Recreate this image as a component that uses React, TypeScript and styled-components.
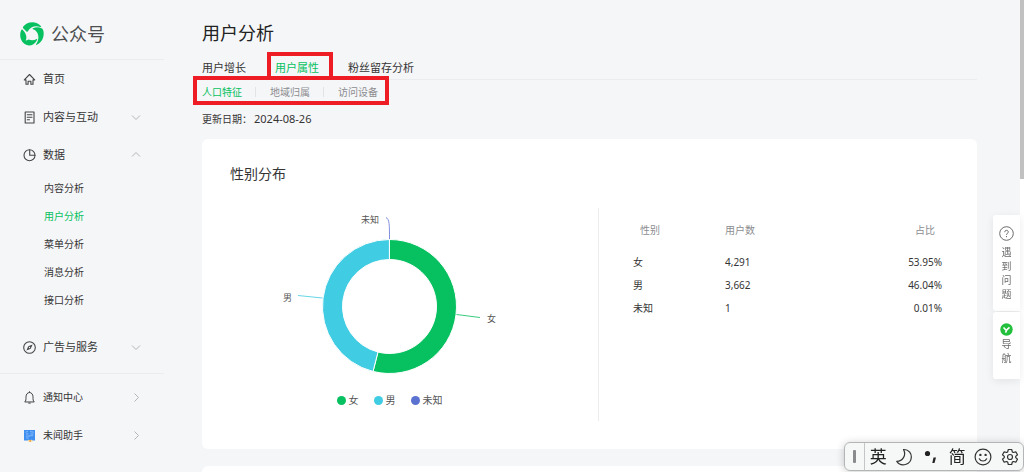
import React from 'react';
import styled, { createGlobalStyle, css } from 'styled-components';

const GREEN = '#07c160';
const CYAN = '#40cce2';
const INDIGO = '#5b72d0';

const GlobalStyle = createGlobalStyle`
  *, *::before, *::after { box-sizing: border-box; }
  body {
    margin: 0;
    background: #f5f6f8;
    color: #353535;
    font-family: "Noto Sans", "Noto Sans CJK SC", sans-serif;
    font-size: 10px;
    line-height: 20px;
  }
  h1, h2, p, ul { margin: 0; padding: 0; font-weight: 400; }
  ul { list-style: none; }
  a { color: inherit; text-decoration: none; }
  button { border: 0; padding: 0; background: none; font: inherit; color: inherit; cursor: pointer; }
`;

const Page = styled.div`
  display: flex;
  height: 100vh;
  overflow: hidden;
`;

const Sidebar = styled.aside`
  flex: 0 0 164px;
`;

const Brand = styled.a`
  display: flex;
  align-items: center;
  gap: 7px;
  height: 59px;
  padding: 9px 0 0 20px;
  font-size: 18px;
  line-height: 24px;
  color: #4c4e50;
`;

const NavGroup = styled.nav<{ $last?: boolean }>`
  border-top: 1px solid #ebecee;
  padding: ${(p) => (p.$last ? '4px 0 0' : '0 0 7px')};
`;

const NavRow = styled.button<{ $small?: boolean }>`
  display: grid;
  grid-template-columns: 13px 1fr 10px;
  align-items: center;
  column-gap: 7px;
  width: 100%;
  height: 38px;
  padding: 0 23px 0 23px;
  text-align: left;
  font-size: ${(p) => (p.$small ? 10 : 11)}px;
`;

const SubList = styled.ul`
  padding-bottom: 14px;
`;

const SubLink = styled.a<{ $active?: boolean }>`
  display: block;
  padding-left: 44px;
  line-height: 28px;
  color: ${(p) => (p.$active ? GREEN : 'inherit')};
`;

const Main = styled.main`
  flex: 1;
  min-width: 0;
  padding: 18px 47px 0 38px;
`;

const Title = styled.h1`
  font-size: 18px;
  line-height: 30px;
  color: #222;
`;

const Tabs = styled.nav`
  display: flex;
  gap: 29px;
  margin-top: 8px;
  border-bottom: 1px solid #ebecee;
  font-size: 11px;
  line-height: 23px;
`;

const highlight = css`
  &::after {
    content: '';
    position: absolute;
    border: 4px solid #ee1c25;
    pointer-events: none;
  }
`;

const Tab = styled.a<{ $active?: boolean }>`
  position: relative;
  color: ${(p) => (p.$active ? GREEN : 'inherit')};
  ${(p) => p.$active && highlight}
  &::after { inset: -4px -14px -1px -8px; }
`;

const SubTabs = styled.nav`
  position: relative;
  display: flex;
  width: fit-content;
  margin-top: 2px;
  ${highlight}
  &::after { inset: -6px -11px -3px -9px; }
`;

const SubTab = styled.a<{ $active?: boolean }>`
  display: flex;
  align-items: center;
  color: ${(p) => (p.$active ? GREEN : '#8c8d90')};
  &:not(:first-child)::before {
    content: '';
    width: 1px;
    height: 10px;
    margin: 0 14px 0 13px;
    background: #e2e3e5;
  }
`;

const Updated = styled.p`
  display: flex;
  gap: 2px;
  margin-top: 7px;
`;

const DateText = styled.time`
  font-size: 11px;
`;

const Card = styled.section`
  margin: 10px 0 17px;
  padding: 25px 28px 28px;
  border-radius: 6px;
  background: #fff;
`;

const CardTitle = styled.h2`
  font-size: 14px;
  line-height: 20px;
  color: #353535;
`;

const Split = styled.div`
  display: grid;
  grid-template-columns: 368fr 351fr;
  margin-top: 24px;
`;

const ChartPane = styled.div`
  display: flex;
  flex-direction: column;
  align-items: center;
  padding-right: 49px;
`;

const Legend = styled.ul`
  display: flex;
  gap: 15px;
  margin: 6px 0 11px;
  color: #555;
`;

const LegendItem = styled.li<{ $color: string }>`
  display: flex;
  align-items: center;
  gap: 3px;
  &::before {
    content: '';
    width: 9px;
    height: 9px;
    border-radius: 50%;
    background: ${(p) => p.$color};
  }
`;

const TablePane = styled.div`
  border-left: 1px solid #ebecee;
  padding: 11px 7px 0 34px;
`;

const Table = styled.table`
  width: 100%;
  border-collapse: collapse;
  th, td { padding: 0; text-align: left; line-height: 23px; }
  th { padding: 0 7px 9px; font-weight: 400; color: #8c8d90; }
  th:first-child { width: 92px; }
  th:nth-child(2) { padding-left: 0; }
  th:last-child, td:last-child { text-align: right; }
`;

const ScrollTrack = styled.div`
  position: fixed;
  inset: 0 0 0 auto;
  width: 4px;
  background: #fff;
`;

const ScrollThumb = styled.div`
  height: 38%;
  background: #c1c1c1;
`;

const Floating = styled.div`
  position: fixed;
  top: 215px;
  right: 4px;
  display: flex;
  flex-direction: column;
  gap: 1px;
  width: 27px;
`;

const FloatButton = styled.button<{ $compact?: boolean }>`
  display: flex;
  flex-direction: column;
  align-items: center;
  gap: ${(p) => (p.$compact ? 1 : 4)}px;
  padding: ${(p) => (p.$compact ? '11px 0 14px' : '11px 0 10px')};
  border-radius: 3px 0 0 3px;
  background: #fff;
  box-shadow: 0 2px 8px rgba(0, 0, 0, 0.08);
  color: #6b6c6e;
  line-height: 14px;
`;

const Vertical = styled.span`
  width: 10px;
  word-break: break-all;
`;

const ImeBar = styled.div`
  position: fixed;
  right: 0;
  bottom: 1px;
  display: flex;
  align-items: center;
  width: 180px;
  height: 29px;
  border: 1px solid #b4b5b6;
  border-radius: 6px;
  background: #f6f7f7;
  box-shadow: 0 1px 8px rgba(0, 0, 0, 0.2);
  color: #222;
`;

const ImeGrip = styled.span`
  display: flex;
  align-items: center;
  justify-content: center;
  flex: none;
  width: 20px;
  height: 100%;
  border-right: 1px solid #c4c5c6;
  &::before {
    content: '';
    width: 3px;
    height: 13px;
    border-radius: 1px;
    background: #8a8b8c;
  }
`;

const ImeButton = styled.button`
  display: flex;
  align-items: center;
  justify-content: center;
  flex: 1;
  height: 27px;
  font-size: 17px;
  line-height: 27px;
`;

const Logo = () => (
  <svg width="24" height="24" viewBox="0 0 24 24" fill={GREEN} aria-hidden="true">
    <path d="M3.300 4.600C7.500-1 16.500-1.300 21 4.300C21.300 4.800 21 5.200 20.400 5C15 3.400 10.600 4.600 7.900 9.300C7.500 10 6.900 10 6.400 9.400C5.500 8.200 4.500 7.300 3.400 6.400C2.700 5.800 2.800 5.200 3.300 4.600Z" />
    <path d="M13 6.300C15.500 5 19 5 21.600 6.200C22.400 6.600 22.900 7.300 23.200 8.200C25 14.400 21.800 20.600 16.800 22.800C16 23.100 15.700 22.600 16.200 22C19.600 17.500 19.400 9.300 13 7.300C12.400 7.100 12.400 6.600 13 6.300Z" />
    <path d="M1.200 8C1.600 7.300 2.200 7.300 2.800 7.900C5.300 10.300 6.500 13 6.400 16L5.700 18.800L8.600 17.600C11.500 18.600 14.200 18.400 16.300 17.200C17 16.800 17.300 17.300 17 17.900C14.200 23.500 8.700 24.700 4.700 22.100C.2 19.200-.900 13 1.200 8Z" />
  </svg>
);

const line = { fill: 'none', stroke: '#454648', strokeWidth: 1.1, strokeLinecap: 'round', strokeLinejoin: 'round' } as const;

const HomeIcon = () => (
  <svg width="13" height="13" viewBox="0 0 13 13" {...line} aria-hidden="true">
    <path d="M1.300 6.900L6.500 1.500L11.700 6.900H10V11.300H7.900V8.200H5.100V11.300H3V6.900Z" />
  </svg>
);
const DocIcon = () => (
  <svg width="13" height="13" viewBox="0 0 13 13" {...line} aria-hidden="true">
    <path d="M2.200 1H11V12H2.200ZM4.300 3.800H9M4.300 6.300H9M4.300 8.800H6.500" />
  </svg>
);
const PieIcon = () => (
  <svg width="13" height="13" viewBox="0 0 13 13" {...line} aria-hidden="true">
    <circle cx="6.500" cy="6.300" r="5.500" />
    <path d="M6.700 .9V6.300H11.900" />
  </svg>
);
const CompassIcon = () => (
  <svg width="13" height="13" viewBox="0 0 13 13" {...line} aria-hidden="true">
    <circle cx="6.500" cy="6.500" r="5.800" />
    <path d="M9.600 3.400L7.700 7.700L3.400 9.600L5.300 5.300Z" fill="#454648" stroke="none" />
    <circle cx="6.500" cy="6.500" r=".7" fill="#f5f6f8" stroke="none" />
  </svg>
);
const BellIcon = () => (
  <svg width="13" height="13" viewBox="0 0 13 13" {...line} strokeWidth={1} aria-hidden="true">
    <path d="M2 10.700C3 9.800 3 8.600 3 5.800C3 3.200 4.500 1.700 6.500 1.500C8.500 1.700 10 3.200 10 5.800C10 8.600 10 9.800 11 10.700ZM6.500 .7V1.500M5.700 12.100H7.300" />
  </svg>
);
const HelperIcon = () => (
  <svg width="13" height="13" viewBox="0 0 13 13" aria-hidden="true">
    <path d="M1 1H12V11.500H1Z" fill="#3f8ff0" />
    <path d="M2.500 3.200L5 2.500M3 5H5.500M7 2.600L10.800 3.200M7.500 5H10.500M3 7.200L10 6.600M3.200 9H5.500" stroke="#a5ceff" strokeWidth=".7" />
    <path d="M4.500 12.500L5.500 10.500L7.200 11.500L9 10.500L9.800 12.500Z" fill="#f5dfa8" />
    <circle cx="7.200" cy="12" r="1" fill="#f2a33a" />
  </svg>
);

const chevrons = { down: 'M1 3.500L5 7.500L9 3.500', up: 'M1 6.500L5 2.500L9 6.500', right: 'M3.500 1.500L7.500 5.500L3.500 9.500' };
const Chevron = ({ to }: { to: keyof typeof chevrons }) => (
  <svg width="10" height="10" viewBox="0 0 10 10" fill="none" stroke="#b4b5b8" aria-hidden="true">
    <path d={chevrons[to]} />
  </svg>
);

const CX = 119.5;
const CY = 98.5;
const point = (r: number, deg: number) => {
  const a = (deg * Math.PI) / 180;
  return `${(CX + r * Math.sin(a)).toFixed(2)} ${(CY - r * Math.cos(a)).toFixed(2)}`;
};
const slice = (from: number, to: number, outer = 67, inner = 47) => {
  const big = to - from > 180 ? 1 : 0;
  return `M${point(outer, from)}A${outer} ${outer} 0 ${big} 1 ${point(outer, to)}L${point(inner, to)}A${inner} ${inner} 0 ${big} 0 ${point(inner, from)}Z`;
};

const Donut = () => (
  <svg width="239" height="176" viewBox="0 0 239 176" role="img" aria-label="性别分布" fontSize="9" fill="#555">
    <g stroke="#fff" strokeWidth="1">
      <path d={slice(0, 194.2)} fill={GREEN} />
      <path d={slice(194.2, 359.9)} fill={CYAN} />
    </g>
    <g fill="none">
      <path d="M186.500 106.500L210 109.500" stroke={GREEN} opacity=".8" />
      <path d="M52.500 90L28 87.500" stroke={CYAN} opacity=".8" />
      <path d="M119.500 31C119.500 17 119.500 11 116 9.500" stroke="#7f90dd" />
    </g>
    <text x="217" y="114">女</text>
    <text x="13" y="93">男</text>
    <text x="91" y="15">未知</text>
  </svg>
);

const legend = [['女', GREEN], ['男', CYAN], ['未知', INDIGO]];
const rows = [['女', '4,291', '53.95%'], ['男', '3,662', '46.04%'], ['未知', '1', '0.01%']];
const subPages = ['内容分析', '用户分析', '菜单分析', '消息分析', '接口分析'];

export default function App() {
  return (
    <>
      <GlobalStyle />
      <Page>
        <Sidebar>
          <Brand href="#"><Logo />公众号</Brand>
          <NavGroup>
            <NavRow><HomeIcon />首页</NavRow>
            <NavRow><DocIcon />内容与互动<Chevron to="down" /></NavRow>
            <NavRow><PieIcon />数据<Chevron to="up" /></NavRow>
            <SubList>
              {subPages.map((name) => (
                <li key={name}><SubLink href="#" $active={name === '用户分析'}>{name}</SubLink></li>
              ))}
            </SubList>
            <NavRow><CompassIcon />广告与服务<Chevron to="down" /></NavRow>
          </NavGroup>
          <NavGroup $last>
            <NavRow $small><BellIcon />通知中心<Chevron to="right" /></NavRow>
            <NavRow $small><HelperIcon />未闻助手<Chevron to="right" /></NavRow>
          </NavGroup>
        </Sidebar>

        <Main>
          <Title>用户分析</Title>
          <Tabs>
            <Tab href="#">用户增长</Tab>
            <Tab href="#" $active>用户属性</Tab>
            <Tab href="#">粉丝留存分析</Tab>
          </Tabs>
          <SubTabs>
            <SubTab href="#" $active>人口特征</SubTab>
            <SubTab href="#">地域归属</SubTab>
            <SubTab href="#">访问设备</SubTab>
          </SubTabs>
          <Updated>更新日期：<DateText>2024-08-26</DateText></Updated>

          <Card>
            <CardTitle>性别分布</CardTitle>
            <Split>
              <ChartPane>
                <Donut />
                <Legend>
                  {legend.map(([name, color]) => (
                    <LegendItem key={name} $color={color}>{name}</LegendItem>
                  ))}
                </Legend>
              </ChartPane>
              <TablePane>
                <Table>
                  <thead>
                    <tr><th>性别</th><th>用户数</th><th>占比</th></tr>
                  </thead>
                  <tbody>
                    {rows.map(([name, count, share]) => (
                      <tr key={name}><td>{name}</td><td>{count}</td><td>{share}</td></tr>
                    ))}
                  </tbody>
                </Table>
              </TablePane>
            </Split>
          </Card>
          <Card />
        </Main>
      </Page>

      <ScrollTrack><ScrollThumb /></ScrollTrack>

      <Floating>
        <FloatButton>
          <svg width="15" height="15" viewBox="0 0 15 15" fill="none" stroke="#6b6c6e" aria-hidden="true">
            <circle cx="7.500" cy="7.500" r="6.800" />
            <path d="M5.700 6.200C5.700 3.700 9.300 3.800 9.300 6C9.300 7.300 7.500 7.300 7.500 8.900M7.500 10V11.200" />
          </svg>
          <Vertical>遇到问题</Vertical>
        </FloatButton>
        <FloatButton $compact>
          <svg width="13" height="13" viewBox="0 0 13 13" aria-hidden="true">
            <circle cx="6.500" cy="6.500" r="6.200" fill="#22c03c" />
            <path d="M3.500 4.500L6.200 7.300L9.500 4.300M6.800 6.800L5.500 9.700" fill="none" stroke="#fff" strokeWidth="1.600" />
          </svg>
          <Vertical>导航</Vertical>
        </FloatButton>
      </Floating>

      <ImeBar>
        <ImeGrip />
        <ImeButton>英</ImeButton>
        <ImeButton aria-label="半角">
          <svg width="18" height="18" viewBox="0 0 18 18" fill="none" stroke="#333" strokeWidth="1.200" strokeLinejoin="round">
            <path d="M8.500 1.500C14.500 1.500 16.500 6 16.300 9.500C15.800 16.800 6 19.500 1.800 13.300C7.500 13.300 11.700 7.500 8.500 1.500Z" />
          </svg>
        </ImeButton>
        <ImeButton aria-label="标点">
          <svg width="18" height="18" viewBox="0 0 18 18" fill="#222">
            <circle cx="5.500" cy="5.500" r="2.600" />
            <path d="M11.500 9.500H14L12.500 15H10.300Z" />
          </svg>
        </ImeButton>
        <ImeButton>简</ImeButton>
        <ImeButton aria-label="表情">
          <svg width="18" height="18" viewBox="0 0 18 18" fill="none" stroke="#333" strokeWidth="1.200" strokeLinecap="round">
            <circle cx="9" cy="9" r="7.900" />
            <path d="M5.300 10.800C6.800 13.700 11.200 13.700 12.700 10.800" />
            <circle cx="6.400" cy="6.900" r=".6" fill="#333" />
            <circle cx="11.600" cy="6.900" r=".6" fill="#333" />
          </svg>
        </ImeButton>
        <ImeButton aria-label="设置">
          <svg width="18" height="18" viewBox="0 0 18 18" fill="none" stroke="#333" strokeWidth="1.200" strokeLinejoin="round">
            <path d="M7.300 1.500H10.700L11.300 3.900L12.400 4.500L14.800 3.800L16.500 6.700L14.700 8.400V9.600L16.500 11.300L14.800 14.200L12.400 13.500L11.300 14.100L10.700 16.500H7.300L6.700 14.100L5.600 13.500L3.200 14.200L1.500 11.300L3.300 9.600V8.400L1.500 6.700L3.200 3.800L5.600 4.500L6.700 3.900Z" />
            <circle cx="9" cy="9" r="2.500" />
          </svg>
        </ImeButton>
      </ImeBar>
    </>
  );
}
